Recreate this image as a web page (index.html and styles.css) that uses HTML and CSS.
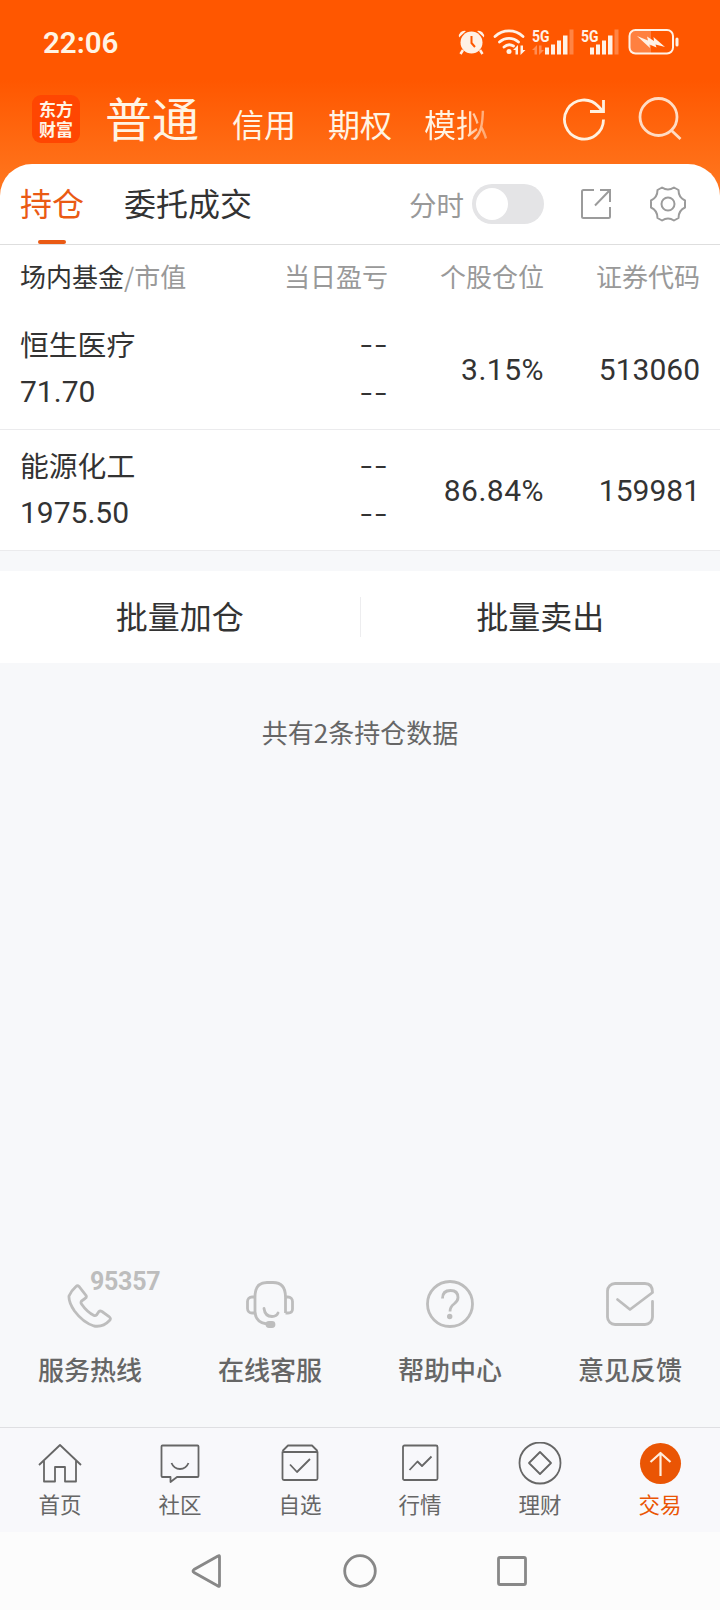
FILE: index.html
```html
<!DOCTYPE html>
<html lang="zh-CN">
<head>
<meta charset="utf-8">
<title>持仓</title>
<link rel="stylesheet" href="styles.css">
</head>
<body>
<div class="app">
  <header class="top">
    <div class="status">
      <span class="clock">22:06</span>
      <svg class="status-icons" width="240" height="50" viewBox="0 0 240 50">
        <g fill="#fff1e6">
          <circle cx="21.5" cy="22.5" r="11"/>
          <path d="M9 17.500a5.500 5.500 0 0 1 7-6.500zM34 17.500a5.500 5.500 0 0 0-7-6.500z"/>
          <path d="M13 30l-2.500 4M30 30l2.500 4" stroke="#fff1e6" stroke-width="2.500"/>
          <path d="M21.500 16v7l3.500 4" fill="none" stroke="#ff5700" stroke-width="2"/>
        </g>
        <g fill="none" stroke="#fff1e6" stroke-width="2.800" stroke-linecap="round">
          <path d="M45 16.500a20.500 20.500 0 0 1 28 0"/>
          <path d="M49.500 22a14 14 0 0 1 19 0"/>
          <path d="M54 27a8 8 0 0 1 9.500-1"/>
        </g>
        <circle cx="59" cy="31.500" r="2.500" fill="#fff1e6"/>
        <path d="M63 30l5-5v9.500h-2.500V30zM75.500 30l-5 5v-9.500H73V30z" fill="#fff1e6"/>
        <text class="net" x="82" y="21.500" textLength="17.500" lengthAdjust="spacingAndGlyphs">5G</text>
        <path d="M82 30l5-5v9.500h-2.500V30zM94 30l-5 5v-9.500h2.500V30z" fill="#ff8d54"/>
        <g fill="#fff1e6">
          <path d="M95 27.500h4v7h-4zM101 24.500h4v10h-4zM107 20.500h4v14h-4zM113 15.500h4.500v19H113z"/>
          <path d="M140 27.500h4v7h-4zM146 24.500h4v10h-4zM152 20.500h4v14h-4zM158 15.500h4.500v19H158z"/>
        </g>
        <path d="M119.500 9.500h4v25h-4zM164.500 9.500h4v25h-4z" fill="#ff8444"/>
        <text class="net" x="131" y="21.500" textLength="17.500" lengthAdjust="spacingAndGlyphs">5G</text>
        <path d="M184 10h17v24h-17a5 5 0 0 1-5-5V15a5 5 0 0 1 5-5z" fill="#ff8040"/>
        <rect x="179.500" y="10" width="43.500" height="23.500" rx="6" fill="none" stroke="#fff1e6" stroke-width="2"/>
        <rect x="225.500" y="17.500" width="3" height="9" rx="1.500" fill="#fff1e6"/>
        <path d="M187 16l11 4.500-1-4 7 4.500-.500-4L215 27l-9.500-2.500 1 3-7-3 .500 3.500z" fill="#fff1e6"/>
      </svg>
    </div>
    <div class="accounts">
      <div class="logo"><span>东方</span><span>财富</span></div>
      <nav class="account-tabs">
        <span class="account current">普通</span>
        <span class="account">信用</span>
        <span class="account">期权</span>
        <span class="account fading">模拟</span>
      </nav>
      <svg class="refresh" width="44" height="44" viewBox="0 0 44 44" fill="none" stroke="#fff1e0" stroke-width="2.800">
        <path d="M41.500 22.500A19.500 19.500 0 1 1 36.500 9.500L41 14.500"/>
        <path d="M41.500 3v11.500H28"/>
      </svg>
      <svg class="search" width="44" height="44" viewBox="0 0 44 44" fill="none" stroke="#ffdcc4" stroke-width="2.800">
        <circle cx="20.500" cy="20" r="18.500"/>
        <path d="M33 33l9.500 9"/>
      </svg>
    </div>
  </header>

  <section class="sheet">
    <div class="tabs">
      <span class="tab selected">持仓</span>
      <span class="tab">委托成交</span>
      <span class="switch-label">分时</span>
      <span class="switch"><i></i></span>
      <svg class="share" width="32" height="32" viewBox="0 0 32 32" fill="none" stroke="#9b9b9b" stroke-width="2">
        <path d="M14 2H3.500A1.500 1.500 0 0 0 2 3.500v25A1.500 1.500 0 0 0 3.500 30h25a1.500 1.500 0 0 0 1.500-1.500V19"/>
        <path d="M20 2h10v12M30 2L15 17.500"/>
      </svg>
      <svg class="gear" width="38" height="38" viewBox="0 0 38 38" fill="none" stroke="#9b9b9b" stroke-width="2" stroke-linejoin="round">
        <circle cx="19" cy="19" r="6.500"/>
        <path d="M13 2.500Q19 6.500 25 2.500L29.500 5Q29.500 12.500 36 15.500V22.500Q29.500 25.500 29.500 33L25 35.500Q19 31.500 13 35.500L8.500 33Q8.500 25.500 2 22.500V15.500Q8.500 12.500 8.500 5Z"/>
      </svg>
    </div>

    <div class="row head">
      <span><b>场内基金</b>/市值</span><span>当日盈亏</span><span>个股仓位</span><span>证券代码</span>
    </div>
    <div class="row item">
      <div class="pair"><span class="name">恒生医疗</span><span class="num">71.70</span></div>
      <div class="pair dash"><span>--</span><span>--</span></div>
      <span class="num percent">3.15%</span>
      <span class="num">513060</span>
    </div>
    <div class="row item">
      <div class="pair"><span class="name">能源化工</span><span class="num">1975.50</span></div>
      <div class="pair dash"><span>--</span><span>--</span></div>
      <span class="num percent">86.84%</span>
      <span class="num">159981</span>
    </div>
  </section>

  <div class="batch">
    <span>批量加仓</span><i></i><span>批量卖出</span>
  </div>
  <p class="count">共有2条持仓数据</p>

  <div class="services">
    <div class="service">
      <div class="service-icon">
        <svg width="48" height="48" viewBox="0 0 48 48">
          <path d="M10 6.500Q11.500 5 13 6.500L20 15.500Q21 17.500 19 18.500L15.500 21Q14.500 22.500 15.500 24Q21 32 28 35.500Q29.500 36 30.500 35L33 31.500Q34 30.500 36 31.500L43 36.500Q45.500 38.500 43.500 40.500Q37 47.500 28 46Q17 42.500 8.500 31Q2.500 22 3 16Q5 11 10 6.500Z"/>
        </svg>
        <span class="hotline">95357</span>
      </div>
      <span>服务热线</span>
    </div>
    <div class="service">
      <div class="service-icon">
        <svg width="48" height="48" viewBox="0 0 48 48">
          <path d="M9 34V17Q9 2.500 21 2.500h6Q39.500 2.500 39.500 17v16"/>
          <path d="M9 17H6a4.500 4.500 0 0 0-4.500 4.500v7A4.500 4.500 0 0 0 6 33h3M39.500 17H42a4.500 4.500 0 0 1 4.500 4.500V29q0 4-4.500 4h-2.500"/>
          <path d="M9 33q1.500 10 12 11M18 28.500q1 8 8 8 4.500 0 6-3.500" stroke-linecap="round"/>
          <rect x="21" y="42.500" width="7" height="4" rx="2" fill="#bdbdbd"/>
        </svg>
      </div>
      <span>在线客服</span>
    </div>
    <div class="service">
      <div class="service-icon">
        <svg width="48" height="48" viewBox="0 0 48 48">
          <circle cx="24" cy="24" r="22.500"/>
          <path d="M16.500 18.500q0-8 8-8 7.500 0 7.500 7 0 3.500-4 6.500t-4 7.500"/>
          <circle cx="23.700" cy="36.500" r="2.700" fill="#bdbdbd" stroke="none"/>
        </svg>
      </div>
      <span>帮助中心</span>
    </div>
    <div class="service">
      <div class="service-icon">
        <svg width="48" height="48" viewBox="0 0 48 48">
          <path d="M46.500 21.500V37a7.500 7.500 0 0 1-7.500 7.500H9A7.500 7.500 0 0 1 1.500 37V11A7.500 7.500 0 0 1 9 3.500h30q7.500 0 7.500 9L24 29.500 11.500 19.500" stroke-linecap="round" stroke-linejoin="round"/>
        </svg>
      </div>
      <span>意见反馈</span>
    </div>
  </div>

  <nav class="bottom">
    <div class="entry">
      <svg width="44" height="44" viewBox="0 0 44 44"><path d="M1 23L22 3l21 20M6 19v20.500h11V25h10v14.500h11V19"/></svg>
      <span>首页</span>
    </div>
    <div class="entry">
      <svg width="44" height="44" viewBox="0 0 44 44"><path d="M4.500 3.500h35a1 1 0 0 1 1 1V34a1 1 0 0 1-1 1H19l-6.500 5v-5h-8a1 1 0 0 1-1-1V4.500a1 1 0 0 1 1-1zM13.500 21q2.500 6 8.500 6t8.500-6"/></svg>
      <span>社区</span>
    </div>
    <div class="entry">
      <svg width="44" height="44" viewBox="0 0 44 44"><path d="M4.500 10v26.500a1.500 1.500 0 0 0 1.500 1.500h32a1.500 1.500 0 0 0 1.500-1.500V10zM4.500 9L10 3.500h24L39.500 9M12 22.500l7 7.500 13-13"/></svg>
      <span>自选</span>
    </div>
    <div class="entry">
      <svg width="44" height="44" viewBox="0 0 44 44"><rect x="5" y="3.500" width="34.500" height="34.500" rx="1.500"/><path d="M11.500 28l8-8.500 4.500 4.500 9.500-9.500"/></svg>
      <span>行情</span>
    </div>
    <div class="entry">
      <svg width="44" height="44" viewBox="0 0 44 44"><circle cx="22" cy="21" r="20.500"/><path d="M22 10L33 21 22 32 11 21z"/></svg>
      <span>理财</span>
    </div>
    <div class="entry active">
      <svg width="44" height="44" viewBox="0 0 44 44"><circle cx="22.500" cy="21.500" r="20.500" fill="#ea5504" stroke="none"/><path d="M22.500 34V11M12.500 20l10-9 10 9" stroke="#ffeedd" stroke-width="2.200"/></svg>
      <span>交易</span>
    </div>
  </nav>

  <div class="system">
    <svg width="36" height="36" viewBox="0 0 36 36"><path d="M29.500 3.500v29Q29.500 34 28 33L4 19.500q-2-1.500 0-3L28 3Q29.500 2 29.500 3.500z"/></svg>
    <svg width="36" height="36" viewBox="0 0 36 36"><circle cx="18" cy="18" r="15.300"/></svg>
    <svg width="36" height="36" viewBox="0 0 36 36"><rect x="4.500" y="4.500" width="27" height="27" rx="1.500"/></svg>
  </div>
</div>
</body>
</html>
```
FILE: styles.css
```css
* { box-sizing: border-box; }

body {
  margin: 0;
  font-family: "Noto Sans CJK SC", sans-serif;
  color: #333;
}

svg { display: block; flex: none; }

.app {
  width: 720px;
  height: 1610px;
  display: flex;
  flex-direction: column;
  background: linear-gradient(#ff5700 0, #ff5700 80px, #ff741c 180px, #ff741c 200px, #f7f8fa 200px);
}

/* Header */
.top { height: 164px; color: #fff4e4; }

.status {
  height: 74px;
  padding: 20px 30px 0 43px;
  display: flex;
  justify-content: space-between;
}

.clock {
  font: 600 29.500px/46px Roboto, sans-serif;
}

.net { font: 700 16px Roboto, sans-serif; fill: #fff1e6; }

.accounts {
  height: 90px;
  padding: 21px 38px 0 32px;
  display: flex;
  align-items: flex-start;
}

.logo {
  width: 48px;
  height: 48px;
  padding-top: 4px;
  border-radius: 9px;
  background: #ff4602;
  display: flex;
  flex-direction: column;
  align-items: center;
  font: 700 17px/20px "Noto Sans CJK SC", sans-serif;
}

.account-tabs {
  flex: 1;
  margin: -1px 0 0 25px;
  display: flex;
  align-items: baseline;
  gap: 32px;
  line-height: 46px;
}

.account { font-size: 32px; }
.account.current { font-size: 47px; margin-right: 1px; }
.account.fading {
  color: transparent;
  background: linear-gradient(90deg, #fff4e4 60%, rgba(255, 244, 228, 0.4));
  background-clip: text;
  -webkit-background-clip: text;
}

.refresh { margin: 2px 32px 0 0; }
.search { margin-top: 2px; }

/* Holdings sheet */
.sheet {
  border-radius: 32px 32px 0 0;
  background: #fff;
}

.tabs {
  height: 81px;
  padding: 0 33px 0 20px;
  border-bottom: 1px solid #dedede;
  display: flex;
  align-items: center;
}

.tab {
  height: 80px;
  margin-right: 40px;
  font-size: 32px;
  line-height: 77px;
}

.tab.selected { position: relative; color: #ea5a14; }
.tab.selected::after {
  content: "";
  position: absolute;
  left: 18px;
  bottom: 0;
  width: 28px;
  height: 4px;
  border-radius: 2px;
  background: #ea5a14;
}

.switch-label {
  margin-left: auto;
  font-size: 27.500px;
  line-height: 76px;
  color: #999;
}

.switch {
  width: 72px;
  height: 40px;
  margin: 0 36px 0 8px;
  padding: 4px;
  border-radius: 20px;
  background: #e4e4e6;
}

.switch i {
  display: block;
  width: 32px;
  height: 32px;
  border-radius: 50%;
  background: #fff;
}

.share { margin-right: 37px; }

.row {
  padding: 0 20px;
  display: grid;
  grid-template-columns: 1fr 168px 156px 156px;
  align-items: center;
  text-align: right;
}

.row > :first-child { text-align: left; }

.head {
  height: 64px;
  padding-bottom: 2px;
  font-size: 26px;
  line-height: 60px;
  color: #999;
}

.head b { font-weight: 400; color: #333; }

.item { height: 121px; border-bottom: 1px solid #ebebed; }

.pair { display: flex; flex-direction: column; line-height: 48px; }
.name { font-size: 28.800px; line-height: 46px; }
.num { font-family: Roboto, sans-serif; font-size: 30px; }
.pair .num { line-height: 50px; }
.percent { letter-spacing: 0.5px; }
.dash { font: 300 32px/48px Inter, sans-serif; }

/* Batch actions */
.batch {
  height: 92px;
  margin-top: 20px;
  display: flex;
  align-items: center;
  background: #fff;
  font-size: 32px;
  line-height: 86px;
}

.batch span { flex: 1; height: 90px; text-align: center; }
.batch i { width: 1px; height: 40px; background: #ededef; }

.count {
  margin: 51px 0 0;
  text-align: center;
  font-size: 26px;
  line-height: 36px;
  color: #666;
}

/* Service shortcuts */
.services {
  margin-top: auto;
  padding-bottom: 39px;
  display: grid;
  grid-template-columns: repeat(4, 1fr);
  color: #666;
  font-size: 26px;
  font-weight: 500;
  line-height: 38px;
  text-align: center;
}

.service { display: flex; flex-direction: column; align-items: center; gap: 22px; }
.service-icon { position: relative; }
.service svg { fill: none; stroke: #bdbdbd; stroke-width: 2.800; }

.hotline {
  position: absolute;
  left: 24px;
  top: -8px;
  font: 700 25px/20px Roboto, sans-serif;
  letter-spacing: -0.3px;
  color: #bdbdbd;
}

/* Bottom navigation */
.bottom {
  height: 105px;
  padding-top: 14px;
  border-top: 1px solid #dfdfe2;
  background: #f8f8fb;
  display: grid;
  grid-template-columns: repeat(6, 1fr);
  font-size: 21.500px;
  line-height: 32px;
  color: #666;
}

.entry { display: flex; flex-direction: column; align-items: center; gap: 2px; }
.entry svg { fill: none; stroke: #666; stroke-width: 1.800; stroke-linejoin: round; }
.entry.active { color: #ea5504; }

.system {
  height: 78px;
  padding: 0 190px;
  background: #fcfcfc;
  display: flex;
  align-items: center;
  justify-content: space-between;
}

.system svg { fill: none; stroke: #888; stroke-width: 2.800; }
```
